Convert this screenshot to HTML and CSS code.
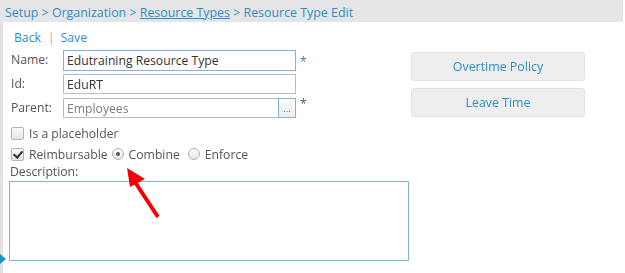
FILE: index.html
```html
<!DOCTYPE html>
<html lang="en">
<head>
    <meta charset="UTF-8">
    <title>Resource Type Edit</title>
    <link rel="stylesheet" href="styles.css">
</head>
<body>
    <header class="crumbs">
        <a href="#">Setup</a> &gt; <a href="#">Organization</a> &gt; <a href="#" class="under">Resource Types</a> &gt; <span>Resource Type Edit</span>
    </header>
    <div class="page">
        <div class="actions">
            <a href="#">Back</a><span class="sep">|</span><a href="#">Save</a>
        </div>
        <div class="content">
            <form class="form">
                <div class="row">
                    <label class="lbl" for="name">Name:</label>
                    <input id="name" class="field focused" type="text" value="Edutraining Resource Type" autofocus>
                    <span class="req blue">*</span>
                </div>
                <div class="row">
                    <label class="lbl" for="rid">Id:</label>
                    <input id="rid" class="field" type="text" value="EduRT">
                </div>
                <div class="row">
                    <label class="lbl" for="parent">Parent:</label>
                    <div class="lookup">
                        <input id="parent" class="field muted" type="text" value="Employees" readonly>
                        <button type="button" class="dots">...</button>
                    </div>
                    <span class="req up">*</span>
                </div>
                <label class="check first"><input type="checkbox"> Is a placeholder</label>
                <div class="opts">
                    <label class="check"><input type="checkbox" checked> Reimbursable</label>
                    <label class="check"><input type="radio" name="mode" checked> Combine</label>
                    <label class="check last"><input type="radio" name="mode"> Enforce</label>
                </div>
                <div class="desc-lbl">Description:</div>
                <textarea class="desc"></textarea>
            </form>
            <div class="side">
                <button type="button" class="side-btn">Overtime Policy</button>
                <button type="button" class="side-btn">Leave Time</button>
            </div>
        </div>
        <span class="marker"></span>
    </div>
    <svg class="arrow" width="60" height="70" viewBox="0 0 60 70">
        <line x1="47" y1="56" x2="24" y2="21" stroke="#f20000" stroke-width="4"/>
        <polygon points="16,7 34,18 19,26" fill="#f20000"/>
    </svg>
</body>
</html>
```

FILE: styles.css
```css
body {
    margin: 0;
    font-family: "Open Sans", Arial, sans-serif;
    font-size: 12.2px;
    color: #555;
    background: #fff;
    position: relative;
    height: 273px;
    overflow: hidden;
}

a {
    color: #2b8fcb;
    text-decoration: none;
}

.crumbs {
    background: #e5e5e5;
    height: 20px;
    line-height: 22px;
    padding: 2px 0 0 5px;
    color: #2b8fcb;
    font-size: 12.4px;
    margin-right: 2px;
}

.crumbs .under {
    text-decoration: underline;
}

.page {
    border-left: 3px solid #e2e2e2;
    padding-left: 6px;
    height: 251px;
    position: relative;
    box-sizing: border-box;
}

.actions {
    padding: 7px 0 0 5px;
    height: 21px;
    line-height: 17px;
}

.sep {
    color: #e0a680;
    margin: 0 6px 0 7px;
}

.content {
    display: flex;
    gap: 2px;
}

.form {
    width: 400px;
    margin: 0;
}

.row {
    display: flex;
    align-items: flex-start;
    height: 20px;
    margin-bottom: 4px;
}

.lbl {
    width: 52px;
    padding-left: 2px;
    line-height: 20px;
}

.field {
    width: 233px;
    height: 20px;
    box-sizing: border-box;
    border: 1px solid #bcbcbc;
    padding: 0 3px;
    font-family: inherit;
    font-size: 12.2px;
    color: #333;
    outline: none;
    margin: 0;
}

.field.focused {
    border-color: #84aee9;
    height: 21px;
}

.field.muted {
    color: #7d7d7d;
    width: 215px;
    border-right: none;
}

.lookup {
    display: flex;
}

.dots {
    width: 18px;
    height: 20px;
    margin: 0;
    padding: 0 0 4px;
    border: 1px solid #7eb3d8;
    background: linear-gradient(#fbfbfb, #ececec);
    font-size: 9px;
    color: #555;
    line-height: 20px;
}

.req {
    margin-left: 4px;
    color: #555;
    line-height: 20px;
}

.req.blue {
    color: #3a7fc0;
    padding-top: 2px;
}

.req.up {
    line-height: 12px;
}

.check {
    display: flex;
    align-items: center;
    gap: 3px;
    height: 20px;
}

.check.first {
    margin-top: 5px;
    padding-left: 2px;
}

.check.last {
    margin-left: 4px;
}

.opts {
    display: flex;
    gap: 4px;
    padding-left: 2px;
    height: 22px;
    align-items: center;
}

.check input {
    appearance: none;
    margin: 0 2px 0 0;
    width: 13px;
    height: 13px;
    border: 1px solid #b4b4b4;
    border-radius: 2px;
    background: linear-gradient(#fafafa, #e6e6e6);
    box-sizing: border-box;
    position: relative;
}

.check input[type="checkbox"]:checked::after {
    content: "";
    position: absolute;
    left: 3px;
    top: 0;
    width: 4px;
    height: 7px;
    border: solid #333;
    border-width: 0 2px 2px 0;
    transform: rotate(40deg);
}

.check input[type="radio"] {
    border-radius: 50%;
    width: 12px;
    height: 12px;
}

.check input[type="radio"]:checked::after {
    content: "";
    position: absolute;
    left: 3px;
    top: 3px;
    width: 4px;
    height: 4px;
    border-radius: 50%;
    background: #555;
}

.desc-lbl {
    padding-left: 1px;
    height: 12px;
    line-height: 12px;
    margin: 1px 0 3px;
}

.desc {
    display: block;
    width: 400px;
    height: 80px;
    box-sizing: border-box;
    border: 1px solid #7fb5d6;
    margin: 0;
    resize: none;
    outline: none;
}

.side {
    display: flex;
    flex-direction: column;
    gap: 7px;
    padding-top: 2px;
}

.side-btn {
    width: 174px;
    height: 29px;
    border: 1px solid #e2e2e2;
    border-radius: 3px;
    background: #eeeeee;
    color: #2b8fcb;
    font-family: inherit;
    font-size: 12.4px;
    margin: 0;
}

.marker {
    position: absolute;
    left: -3px;
    top: 232px;
    border-left: 6px solid #1b8fc8;
    border-top: 5px solid transparent;
    border-bottom: 5px solid transparent;
}

.arrow {
    position: absolute;
    left: 111px;
    top: 161px;
}
```
